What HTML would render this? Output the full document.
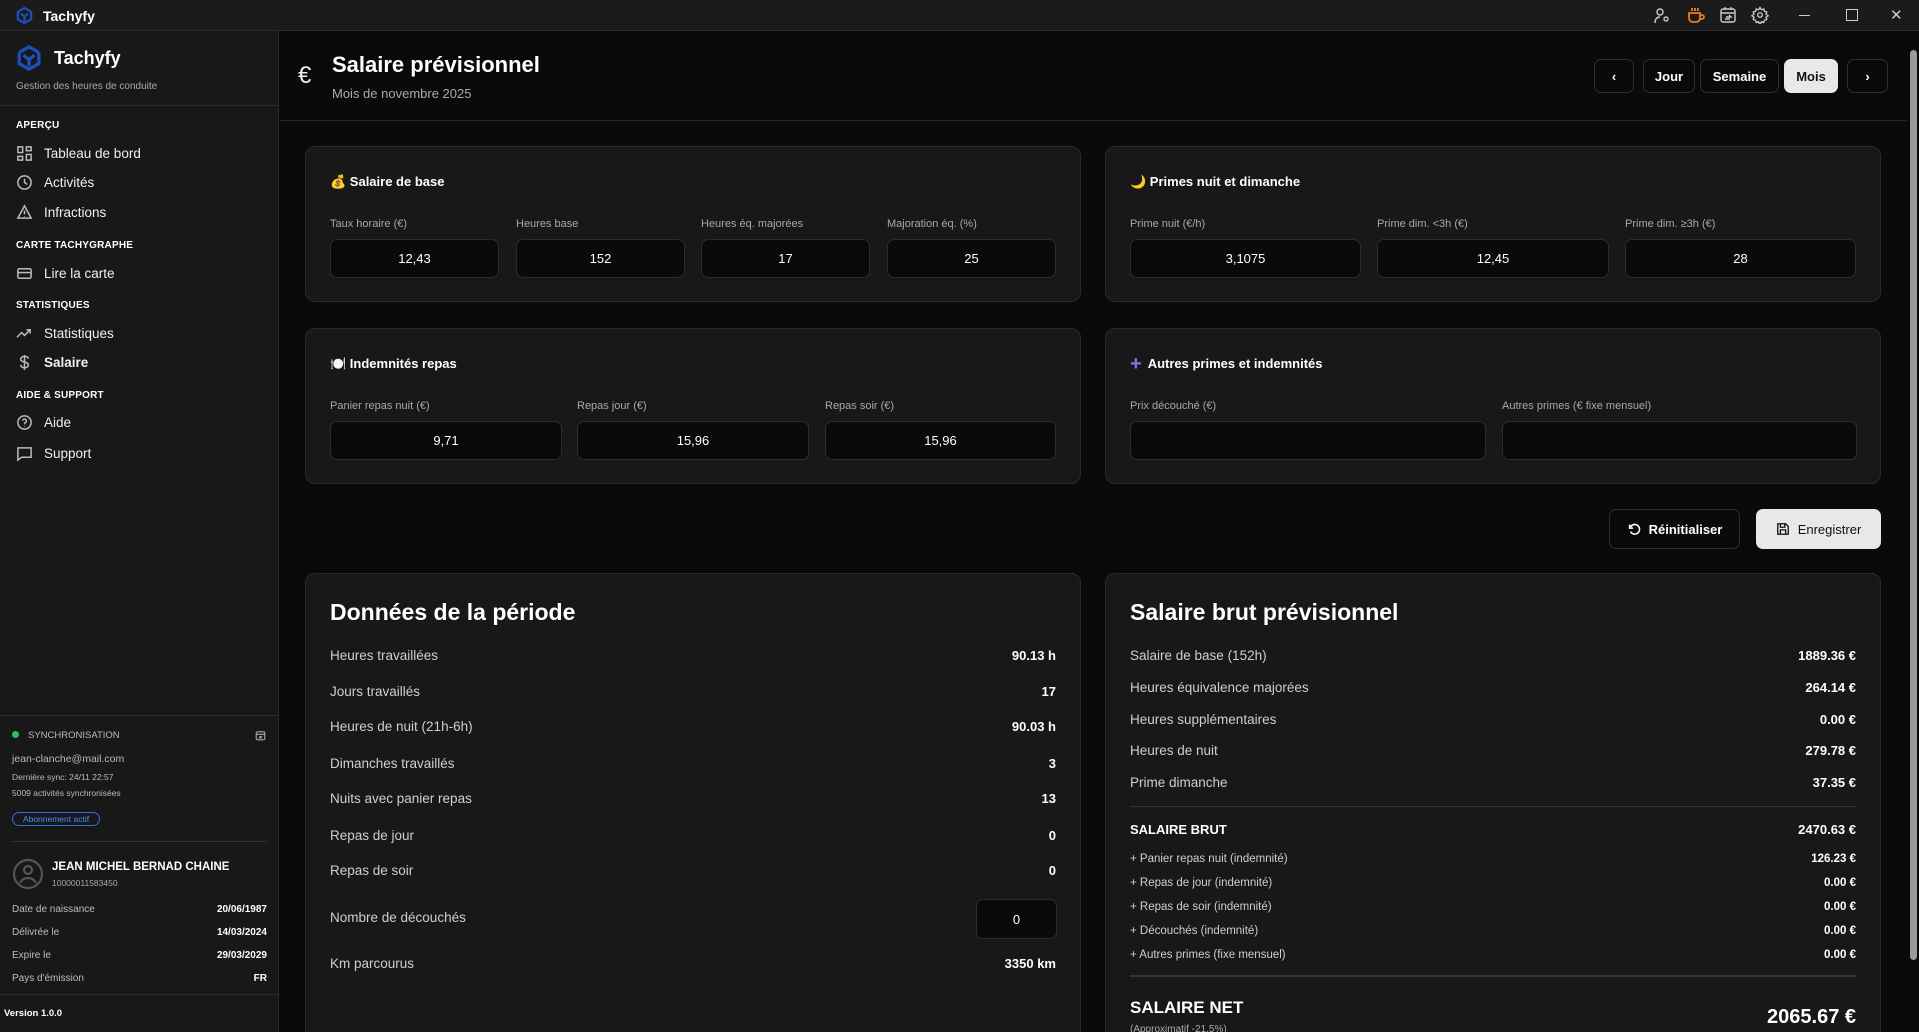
<!DOCTYPE html>
<html><head><meta charset="utf-8">
<style>
*{box-sizing:border-box;margin:0;padding:0}
html{width:1919px;height:1032px;overflow:hidden}
body{width:1919px;height:1032px;overflow:hidden;background:#0a0a0a;font-family:"Liberation Sans",sans-serif;color:#fff;position:relative}
.abs{position:absolute}
.tb{left:0;top:0;width:1919px;height:31px;background:#1b1b1b;border-bottom:1px solid #2e2e2e}
.sb{left:0;top:31px;width:279px;height:1001px;background:#181818;border-right:1px solid #2a2a2a}
.sec{position:absolute;left:16px;font-size:10px;font-weight:bold;color:#fff;letter-spacing:.2px}
.item{position:absolute;left:16px;font-size:13.5px;color:#f0f0f0;display:flex;align-items:center;gap:11px}
.item svg{width:17px;height:17px;fill:none;stroke:#bbb;stroke-width:1.6}
.card{position:absolute;background:#181818;border:1px solid #2a2a2a;border-radius:10px;overflow:hidden}
.ct{position:absolute;left:24px;top:27px;font-size:13px;font-weight:bold;display:flex;align-items:center;gap:6px}
.lbl{position:absolute;font-size:11px;color:#a8a8a8}
.inp{position:absolute;height:39px;background:#0a0a0a;border:1px solid #2c2c2c;border-radius:7px;font-size:13px;display:flex;align-items:center;justify-content:center;color:#fff}
.btn{position:absolute;border:1px solid #2e2e2e;border-radius:7px;background:#0a0a0a;font-size:13px;font-weight:bold;display:flex;align-items:center;justify-content:center;color:#fff;gap:8px}
.row{position:absolute;left:24px;right:24px;display:flex;justify-content:space-between;align-items:center;font-size:13.5px;color:#cfcfcf}
.row b{color:#fff;font-size:13px}
.sm{font-size:11.5px}
.sm b{font-size:11.5px}
.kv{position:absolute;left:12px;width:255px;display:flex;justify-content:space-between;font-size:10px;color:#bdbdbd}
.kv b{color:#fff}
</style></head><body>
<div class="abs tb">
 <svg class="abs" style="left:15px;top:6px" width="19" height="19" viewBox="0 0 20 20" fill="none" stroke="#1e4fb8" stroke-width="2.4"><path d="M3 6l7-4 7 4M3 6v8l7 4 7-4V6M6 8l4 3 4-3M10 11v5"/></svg>
 <div class="abs" style="left:43px;top:8px;font-size:14px;font-weight:bold">Tachyfy</div>
 <svg class="abs" style="left:1653px;top:7px" width="18" height="18" viewBox="0 0 18 18" fill="none" stroke="#ccc" stroke-width="1.4"><circle cx="7" cy="5" r="3"/><path d="M2 16c0-4 2-6 5-6"/><circle cx="13" cy="12" r="2"/></svg>
 <svg class="abs" style="left:1686px;top:6px" width="19" height="19" viewBox="0 0 19 19" fill="none" stroke="#f07a1a" stroke-width="1.8"><path d="M3 7h11v5a4 4 0 0 1-4 4H7a4 4 0 0 1-4-4zM14 9h2a2 2 0 0 1 0 4h-2M6 2v3M9 2v3M12 2v3"/></svg>
 <svg class="abs" style="left:1719px;top:6px" width="18" height="18" viewBox="0 0 18 18" fill="none" stroke="#ccc" stroke-width="1.4"><rect x="2" y="3" width="14" height="13" rx="2"/><path d="M2 7h14M6 1v3M12 1v3M7 11h5l-2-2M11 13H6"/></svg>
 <svg class="abs" style="left:1751px;top:6px" width="18" height="18" viewBox="0 0 24 24" fill="none" stroke="#ccc" stroke-width="1.8"><circle cx="12" cy="12" r="3"/><path d="M12 2l2 3 3-1 1 3 3 1-1 3 3 2-3 2 1 3-3 1-1 3-3-1-2 3-2-3-3 1-1-3-3-1 1-3-3-2 3-2-1-3 3-1 1-3 3 1z"/></svg>
 <div class="abs" style="left:1799px;top:15px;width:11px;height:1px;background:#ccc"></div>
 <div class="abs" style="left:1846px;top:9px;width:12px;height:12px;border:1.3px solid #ccc"></div>
 <div class="abs" style="left:1890px;top:6px;font-size:15px;color:#ccc">✕</div>
</div>
<div class="abs sb">
 <svg class="abs" style="left:15px;top:13px" width="28" height="28" viewBox="0 0 20 20" fill="none" stroke="#1e4fb8" stroke-width="2.4"><path d="M3 6l7-4 7 4M3 6v8l7 4 7-4V6M6 8l4 3 4-3M10 11v5"/></svg>
 <div class="abs" style="left:54px;top:17px;font-size:18px;font-weight:bold">Tachyfy</div>
 <div class="abs" style="left:16px;top:50px;font-size:10px;color:#aaa">Gestion des heures de conduite</div>
 <div class="abs" style="left:0;top:74px;width:279px;height:1px;background:#2e2e2e"></div>
 <div class="sec" style="top:89px">APERÇU</div>
 <div class="item" style="top:114px"><svg viewBox="0 0 18 18"><rect x="2" y="2" width="5" height="6"/><rect x="11" y="2" width="5" height="4"/><rect x="2" y="12" width="5" height="4"/><rect x="11" y="10" width="5" height="6"/></svg>Tableau de bord</div>
 <div class="item" style="top:143px"><svg viewBox="0 0 18 18"><circle cx="9" cy="9" r="7"/><path d="M9 5v4l3 2"/></svg>Activités</div>
 <div class="item" style="top:173px"><svg viewBox="0 0 18 18"><path d="M9 2l7 13H2zM9 7v4M9 13v.5"/></svg>Infractions</div>
 <div class="sec" style="top:209px">CARTE TACHYGRAPHE</div>
 <div class="item" style="top:234px"><svg viewBox="0 0 18 18"><rect x="2" y="4" width="14" height="10" rx="1.5"/><path d="M2 8h14"/></svg>Lire la carte</div>
 <div class="sec" style="top:269px">STATISTIQUES</div>
 <div class="item" style="top:294px"><svg viewBox="0 0 18 18"><path d="M1 13l5-5 3 3 6-6M11 5h4v4"/></svg>Statistiques</div>
 <div class="item" style="top:323px;font-weight:bold"><svg viewBox="0 0 18 18"><path d="M9 1v16M13 5c0-2-2-2.5-4-2.5S5 3.5 5 5.5s2 2.5 4 3 4 1 4 3-2 3-4 3-4-1-4-3"/></svg>Salaire</div>
 <div class="sec" style="top:359px">AIDE &amp; SUPPORT</div>
 <div class="item" style="top:383px"><svg viewBox="0 0 18 18"><circle cx="9" cy="9" r="7"/><path d="M7 7a2 2 0 1 1 3 2c-1 .5-1 1-1 2M9 13v.5"/></svg>Aide</div>
 <div class="item" style="top:414px"><svg viewBox="0 0 18 18"><path d="M2 3h14v10H6l-4 3z"/></svg>Support</div>
 <div class="abs" style="left:0;top:684px;width:279px;height:1px;background:#2e2e2e"></div>
 <div class="abs" style="left:12px;top:700px;width:7px;height:7px;border-radius:50%;background:#22c55e"></div>
 <div class="abs" style="left:28px;top:699px;font-size:9.5px;color:#bbb">SYNCHRONISATION</div>
 <svg class="abs" style="left:255px;top:699px" width="11" height="11" viewBox="0 0 18 18" fill="none" stroke="#aaa" stroke-width="1.8"><rect x="2" y="3" width="14" height="13" rx="2"/><path d="M2 7h14M7 11h5M11 13H6"/></svg>
 <div class="abs" style="left:12px;top:722px;font-size:10.5px;color:#bbb">jean-clanche@mail.com</div>
 <div class="abs" style="left:12px;top:741px;font-size:8.5px;color:#bbb">Dernière sync: 24/11 22:57</div>
 <div class="abs" style="left:12px;top:757px;font-size:8.5px;color:#bbb">5009 activités synchronisées</div>
 <div class="abs" style="left:12px;top:781px;width:88px;height:14px;border:1px solid #2f6fe8;border-radius:8px;font-size:8.5px;color:#4d8af7;text-align:center;line-height:12px">Abonnement actif</div>
 <div class="abs" style="left:12px;top:810px;width:255px;height:1px;background:#333"></div>
 <svg class="abs" style="left:12px;top:827px" width="32" height="32" viewBox="0 0 32 32" fill="none" stroke="#555" stroke-width="2.2"><circle cx="16" cy="16" r="14"/><circle cx="16" cy="12" r="4"/><path d="M8 25c2-4 5-5 8-5s6 1 8 5"/></svg>
 <div class="abs" style="left:52px;top:830px;font-size:11.5px;font-weight:bold">JEAN MICHEL BERNAD CHAINE</div>
 <div class="abs" style="left:52px;top:847px;font-size:8.5px;color:#aaa">10000011583450</div>
 <div class="kv" style="top:873px"><span>Date de naissance</span><b>20/06/1987</b></div>
 <div class="kv" style="top:896px"><span>Délivrée le</span><b>14/03/2024</b></div>
 <div class="kv" style="top:919px"><span>Expire le</span><b>29/03/2029</b></div>
 <div class="kv" style="top:942px"><span>Pays d'émission</span><b>FR</b></div>
 <div class="abs" style="left:0;top:963px;width:279px;height:1px;background:#2e2e2e"></div>
 <div class="abs" style="left:4px;top:977px;font-size:9.5px;font-weight:bold">Version 1.0.0</div>
</div>
<div class="abs" style="left:280px;top:120px;width:1627px;height:1px;background:#262626"></div>
<div class="abs" style="left:298px;top:62px;font-size:24px;color:#eee">€</div>
<div class="abs" style="left:332px;top:52px;font-size:22px;font-weight:bold">Salaire prévisionnel</div>
<div class="abs" style="left:332px;top:86px;font-size:13px;color:#aaa">Mois de novembre 2025</div>
<div class="btn" style="left:1594px;top:59px;width:40px;height:34px">‹</div>
<div class="btn" style="left:1643px;top:59px;width:52px;height:34px">Jour</div>
<div class="btn" style="left:1700px;top:59px;width:79px;height:34px">Semaine</div>
<div class="btn" style="left:1784px;top:59px;width:54px;height:34px;background:#e8e8e8;color:#111;border-color:#e8e8e8">Mois</div>
<div class="btn" style="left:1847px;top:59px;width:41px;height:34px">›</div>
<div class="abs" style="left:1907px;top:31px;width:12px;height:1001px;background:#0a0a0a"></div>
<div class="abs" style="left:1910px;top:50px;width:7px;height:910px;background:#9a9a9a;border-radius:4px"></div>
<div class="card" style="left:305px;top:146px;width:776px;height:156px">
 <div class="ct">💰 Salaire de base</div>
 <div class="lbl" style="left:24px;top:71px">Taux horaire (€)</div>
 <div class="lbl" style="left:210px;top:71px">Heures base</div>
 <div class="lbl" style="left:395px;top:71px">Heures éq. majorées</div>
 <div class="lbl" style="left:581px;top:71px">Majoration éq. (%)</div>
 <div class="inp" style="left:24px;top:92px;width:169px">12,43</div>
 <div class="inp" style="left:210px;top:92px;width:169px">152</div>
 <div class="inp" style="left:395px;top:92px;width:169px">17</div>
 <div class="inp" style="left:581px;top:92px;width:169px">25</div>
</div>
<div class="card" style="left:1105px;top:146px;width:776px;height:156px">
 <div class="ct">🌙 Primes nuit et dimanche</div>
 <div class="lbl" style="left:24px;top:71px">Prime nuit (€/h)</div>
 <div class="lbl" style="left:271px;top:71px">Prime dim. &lt;3h (€)</div>
 <div class="lbl" style="left:519px;top:71px">Prime dim. ≥3h (€)</div>
 <div class="inp" style="left:24px;top:92px;width:231px">3,1075</div>
 <div class="inp" style="left:271px;top:92px;width:232px">12,45</div>
 <div class="inp" style="left:519px;top:92px;width:231px">28</div>
</div>
<div class="card" style="left:305px;top:328px;width:776px;height:156px">
 <div class="ct">🍽️ Indemnités repas</div>
 <div class="lbl" style="left:24px;top:71px">Panier repas nuit (€)</div>
 <div class="lbl" style="left:271px;top:71px">Repas jour (€)</div>
 <div class="lbl" style="left:519px;top:71px">Repas soir (€)</div>
 <div class="inp" style="left:24px;top:92px;width:232px">9,71</div>
 <div class="inp" style="left:271px;top:92px;width:232px">15,96</div>
 <div class="inp" style="left:519px;top:92px;width:231px">15,96</div>
</div>
<div class="card" style="left:1105px;top:328px;width:776px;height:156px">
 <div class="ct"><span style="color:#8b6cf0;font-size:20px;line-height:14px">+</span> Autres primes et indemnités</div>
 <div class="lbl" style="left:24px;top:71px">Prix découché (€)</div>
 <div class="lbl" style="left:396px;top:71px">Autres primes (€ fixe mensuel)</div>
 <div class="inp" style="left:24px;top:92px;width:356px"></div>
 <div class="inp" style="left:396px;top:92px;width:355px"></div>
</div>
<div class="btn" style="left:1609px;top:509px;width:131px;height:40px"><svg width="14" height="14" viewBox="0 0 16 16" fill="none" stroke="#fff" stroke-width="1.8"><path d="M3 3v4h4M3.5 7A5.5 5.5 0 1 1 4 11"/></svg>Réinitialiser</div>
<div class="btn" style="left:1756px;top:509px;width:125px;height:40px;background:#e8e8e8;color:#111;border-color:#e8e8e8;font-weight:normal"><svg width="14" height="14" viewBox="0 0 16 16" fill="none" stroke="#111" stroke-width="1.5"><path d="M2 2h9l3 3v9H2zM5 2v4h5V2M5 14V9h6v5"/></svg>Enregistrer</div>
<div class="card" style="left:305px;top:573px;width:776px;height:470px">
 <div class="abs" style="left:24px;top:25px;font-size:23px;font-weight:bold">Données de la période</div>
 <div class="row" style="top:74px"><span>Heures travaillées</span><b>90.13 h</b></div>
 <div class="row" style="top:110px"><span>Jours travaillés</span><b>17</b></div>
 <div class="row" style="top:145px"><span>Heures de nuit (21h-6h)</span><b>90.03 h</b></div>
 <div class="row" style="top:182px"><span>Dimanches travaillés</span><b>3</b></div>
 <div class="row" style="top:217px"><span>Nuits avec panier repas</span><b>13</b></div>
 <div class="row" style="top:254px"><span>Repas de jour</span><b>0</b></div>
 <div class="row" style="top:289px"><span>Repas de soir</span><b>0</b></div>
 <div class="row" style="top:336px"><span>Nombre de découchés</span></div>
 <div class="inp" style="left:670px;top:325px;width:81px;height:40px">0</div>
 <div class="row" style="top:382px"><span>Km parcourus</span><b>3350 km</b></div>
</div>
<div class="card" style="left:1105px;top:573px;width:776px;height:470px">
 <div class="abs" style="left:24px;top:25px;font-size:23px;font-weight:bold">Salaire brut prévisionnel</div>
 <div class="row" style="top:74px"><span>Salaire de base (152h)</span><b>1889.36 €</b></div>
 <div class="row" style="top:106px"><span>Heures équivalence majorées</span><b>264.14 €</b></div>
 <div class="row" style="top:138px"><span>Heures supplémentaires</span><b>0.00 €</b></div>
 <div class="row" style="top:169px"><span>Heures de nuit</span><b>279.78 €</b></div>
 <div class="row" style="top:201px"><span>Prime dimanche</span><b>37.35 €</b></div>
 <div class="abs" style="left:24px;right:24px;top:232px;height:1px;background:#333"></div>
 <div class="row" style="top:248px;color:#fff;font-weight:bold;font-size:13px"><span>SALAIRE BRUT</span><b>2470.63 €</b></div>
 <div class="row sm" style="top:279px"><span>+ Panier repas nuit (indemnité)</span><b>126.23 €</b></div>
 <div class="row sm" style="top:303px"><span>+ Repas de jour (indemnité)</span><b>0.00 €</b></div>
 <div class="row sm" style="top:327px"><span>+ Repas de soir (indemnité)</span><b>0.00 €</b></div>
 <div class="row sm" style="top:351px"><span>+ Découchés (indemnité)</span><b>0.00 €</b></div>
 <div class="row sm" style="top:375px"><span>+ Autres primes (fixe mensuel)</span><b>0.00 €</b></div>
 <div class="abs" style="left:24px;right:24px;top:401px;height:2px;background:#333"></div>
 <div class="abs" style="left:24px;top:424px;font-size:17px;font-weight:bold">SALAIRE NET</div>
 <div class="abs" style="left:24px;top:450px;font-size:10px;color:#aaa">(Approximatif -21.5%)</div>
 <div class="abs" style="right:24px;top:432px;font-size:20px;font-weight:bold">2065.67 €</div>
</div>
</body></html>
